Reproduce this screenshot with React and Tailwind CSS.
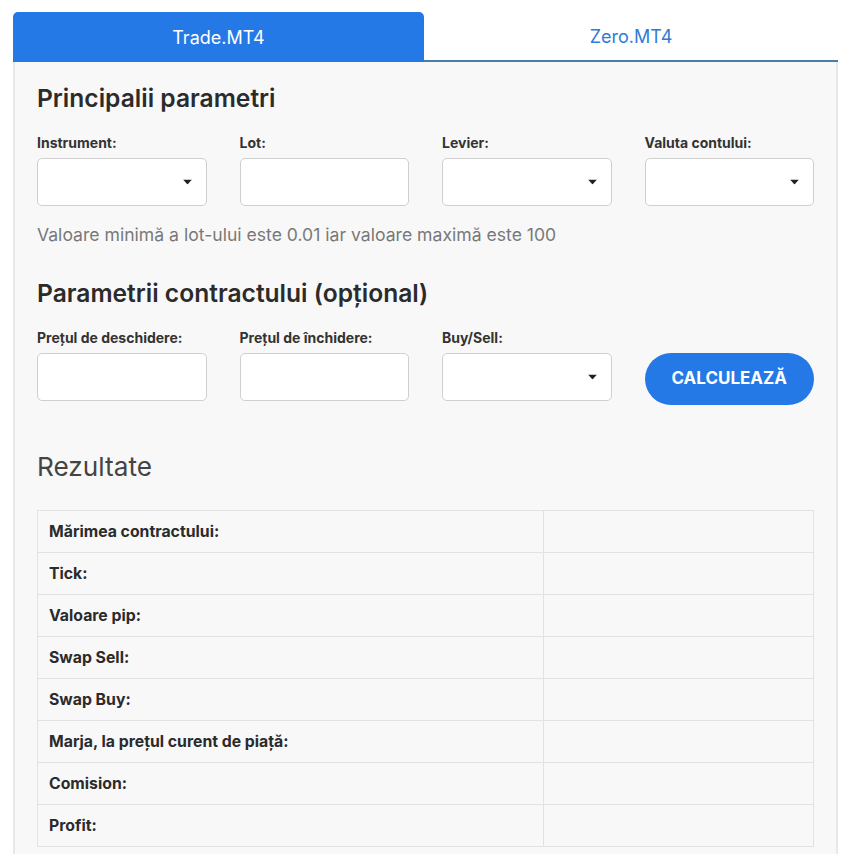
const font = { fontFamily: 'Inter, "Noto Sans", sans-serif' };

function Caret() {
  return (
    <svg width="9" height="5" viewBox="0 0 9 5" className="absolute right-[14px] top-1/2 -translate-y-1/2">
      <path d="M0 0h9L4.5 5z" fill="#222" />
    </svg>
  );
}

function Field({ label, select }) {
  return (
    <div className="flex flex-col">
      <label className="text-[14px] font-bold text-[#333] leading-[16px] mb-[7px]">{label}</label>
      <div className="relative h-[48px] bg-white border border-[#cfcfcf] rounded-[5px]">
        {select && <Caret />}
      </div>
    </div>
  );
}

const rows = [
  'Mărimea contractului:',
  'Tick:',
  'Valoare pip:',
  'Swap Sell:',
  'Swap Buy:',
  'Marja, la prețul curent de piață:',
  'Comision:',
  'Profit:',
];

export default function App() {
  return (
    <div style={font} className="bg-white min-h-[854px] pt-[12px] px-[13px]">
      <div className="w-[825px]">
        {/* tabs */}
        <div className="flex h-[50px]">
          <div className="w-[411px] bg-[#2479e6] rounded-t-[5px] flex items-center justify-center text-white text-[18px]">
            Trade.MT4
          </div>
          <div className="flex-1 border-b-2 border-[#4a7ea8] flex items-center justify-center text-[#2f7bd6] text-[18px]">
            Zero.MT4
          </div>
        </div>

        <div className="bg-[#f8f8f8] border-x-2 border-[#e8e8e8] px-[22px] pt-[20px] pb-[8px]">
          <h2 className="text-[24.6px] font-semibold text-[#2b2b2b] leading-[32px]">Principalii parametri</h2>
          <div className="grid grid-cols-4 gap-x-[33px] mt-[21px]">
            <Field label="Instrument:" select />
            <Field label="Lot:" />
            <Field label="Levier:" select />
            <Field label="Valuta contului:" select />
          </div>
          <p className="text-[17.6px] text-[#787878] mt-[19px] leading-[20px]">
            Valoare minimă a lot-ului este 0.01 iar valoare maximă este 100
          </p>

          <h2 className="text-[24.6px] font-semibold text-[#2b2b2b] leading-[32px] mt-[32px]">
            Parametrii contractului (opțional)
          </h2>
          <div className="grid grid-cols-4 gap-x-[33px] mt-[21px] items-end">
            <Field label="Prețul de deschidere:" />
            <Field label="Prețul de închidere:" />
            <Field label="Buy/Sell:" select />
            <button className="h-[52px] -mb-[4px] rounded-full bg-[#2479e6] text-white font-bold text-[17px]">
              CALCULEAZĂ
            </button>
          </div>

          <h2 className="text-[26.2px] font-normal text-[#444] leading-[32px] mt-[50px]">Rezultate</h2>

          <table className="w-full mt-[27px] border-collapse">
            <tbody>
              {rows.map((r) => (
                <tr key={r} className="h-[42px]">
                  <td className="w-[506px] border border-[#e2e2e2] pl-[11px] text-[15.8px] font-bold text-[#2b2b2b]">{r}</td>
                  <td className="border border-[#e2e2e2]"></td>
                </tr>
              ))}
            </tbody>
          </table>
        </div>
      </div>
    </div>
  );
}
